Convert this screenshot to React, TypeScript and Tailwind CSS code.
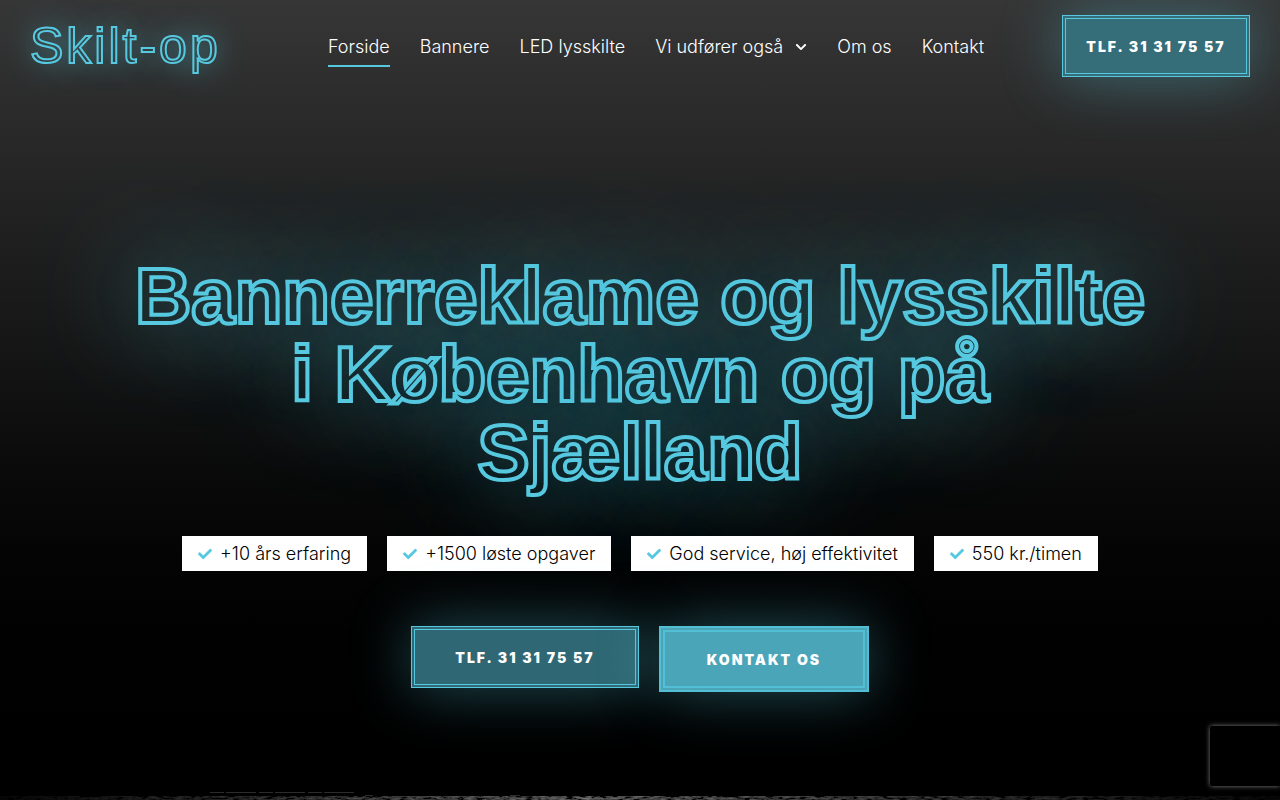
import React from 'react';
import { FaCheck, FaChevronDown } from 'react-icons/fa';

const navItems = [
  { label: 'Forside', href: '#forside', active: true },
  { label: 'Bannere', href: '#bannere' },
  { label: 'LED lysskilte', href: '#led-lysskilte' },
  { label: 'Vi udfører også', href: '#vi-udfoerer', hasMenu: true },
  { label: 'Om os', href: '#om-os' },
  { label: 'Kontakt', href: '#kontakt' },
];

const benefits = ['+10 års erfaring', '+1500 løste opgaver', 'God service, høj effektivitet', '550 kr./timen'];

function Header() {
  return (
    <header className="flex items-center justify-between px-[30px] pt-[15px]">
      <a
        href="#forside"
        className="w-[220px] font-['Liberation_Sans',sans-serif] text-[50px] leading-[62px] tracking-[3px] text-transparent [-webkit-text-stroke:2px_#56c8df] [text-shadow:0_0_30px_#56c8dfcc]"
      >
        Skilt-op
      </a>

      <nav>
        <ul className="flex items-center gap-[30px]">
          {navItems.map((item) => (
            <li key={item.label}>
              <a
                href={item.href}
                className={`flex items-center gap-3 border-b-2 pt-[10px] pb-[6px] text-[18px] leading-6 text-white ${
                  item.active ? 'border-[#56c8df]' : 'border-transparent'
                }`}
              >
                {item.label}
                {item.hasMenu && <FaChevronDown size={12} />}
              </a>
            </li>
          ))}
        </ul>
      </nav>

      <a
        href="tel:31317557"
        className="flex h-[62px] w-[188px] items-center justify-center border-4 border-double border-[#56c8df] bg-[#356d79] text-[14px] font-black tracking-[2px] text-white uppercase shadow-[0_0_60px_#56c8df66]"
      >
        Tlf. 31 31 75 57
      </a>
    </header>
  );
}

// Edge of the brick wall that starts under the hero
function BrickEdge() {
  return (
    <svg className="block h-2 w-full" aria-hidden="true">
      <defs>
        <filter id="grit" x="0" y="0" width="100%" height="100%">
          <feTurbulence type="fractalNoise" baseFrequency="0.12 0.5" numOctaves="4" seed="8" />
          <feColorMatrix values="0.8 0 0 0 -0.27  0.8 0 0 0 -0.27  0.8 0 0 0 -0.27  0 0 0 0 1" />
        </filter>
        <linearGradient id="fade">
          <stop offset="0" stopColor="#000" stopOpacity="0.95" />
          <stop offset="0.45" stopColor="#000" stopOpacity="0.3" />
          <stop offset="1" stopColor="#000" stopOpacity="0.95" />
        </linearGradient>
      </defs>
      <rect y="4" width="100%" height="4" filter="url(#grit)" />
      <rect width="100%" height="8" fill="url(#fade)" />
      <path d="M210 .5h145M510 3.5h10M365 3.5h8" stroke="#2c2c2c" strokeDasharray="14 2 30 3" />
    </svg>
  );
}

export default function App() {
  return (
    <div className="flex min-h-screen flex-col overflow-x-hidden bg-black bg-linear-to-b from-[#363636] via-[#111111] via-50% to-black font-['Inter',sans-serif] font-light">
      <Header />

      <main className="flex flex-1 flex-col items-center px-5 pt-[180px] pb-[100px]">
        <h1 className="max-w-[1040px] text-center font-['Liberation_Sans',sans-serif] text-[78px] leading-[78px] font-bold text-transparent [-webkit-text-stroke:4px_#56c8df] [text-shadow:0_0_100px_#56c8dfcc]">
          Bannerreklame og lysskilte i København og på Sjælland
        </h1>

        <ul className="mt-[45px] flex flex-wrap justify-center gap-5">
          {benefits.map((benefit) => (
            <li key={benefit} className="flex h-[35px] items-center gap-2 bg-white px-4 text-[18px] text-black">
              <FaCheck size={14} className="text-[#56c8df]" />
              {benefit}
            </li>
          ))}
        </ul>

        <div className="mt-[55px] flex flex-wrap items-start justify-center gap-5">
          <a
            href="tel:31317557"
            className="flex h-[62px] w-[228px] items-center justify-center border-4 border-double border-[#56c8df] bg-[#2f6874] text-[14px] font-black tracking-[2px] text-white uppercase shadow-[0_0_60px_#56c8df66]"
          >
            Tlf. 31 31 75 57
          </a>
          <a
            href="#kontakt"
            className="flex h-[66px] w-[210px] items-center justify-center border-[6px] border-double border-[#53bfd5] bg-[#4ba5b9] text-[14px] font-black tracking-[2px] text-white uppercase shadow-[0_0_60px_#56c8df66]"
          >
            Kontakt os
          </a>
        </div>
      </main>

      <BrickEdge />

      <div className="fixed right-0 bottom-[14px] h-[60px] w-[70px] rounded-l-xs bg-black shadow-[0_0_5px_#808080]" />
    </div>
  );
}
